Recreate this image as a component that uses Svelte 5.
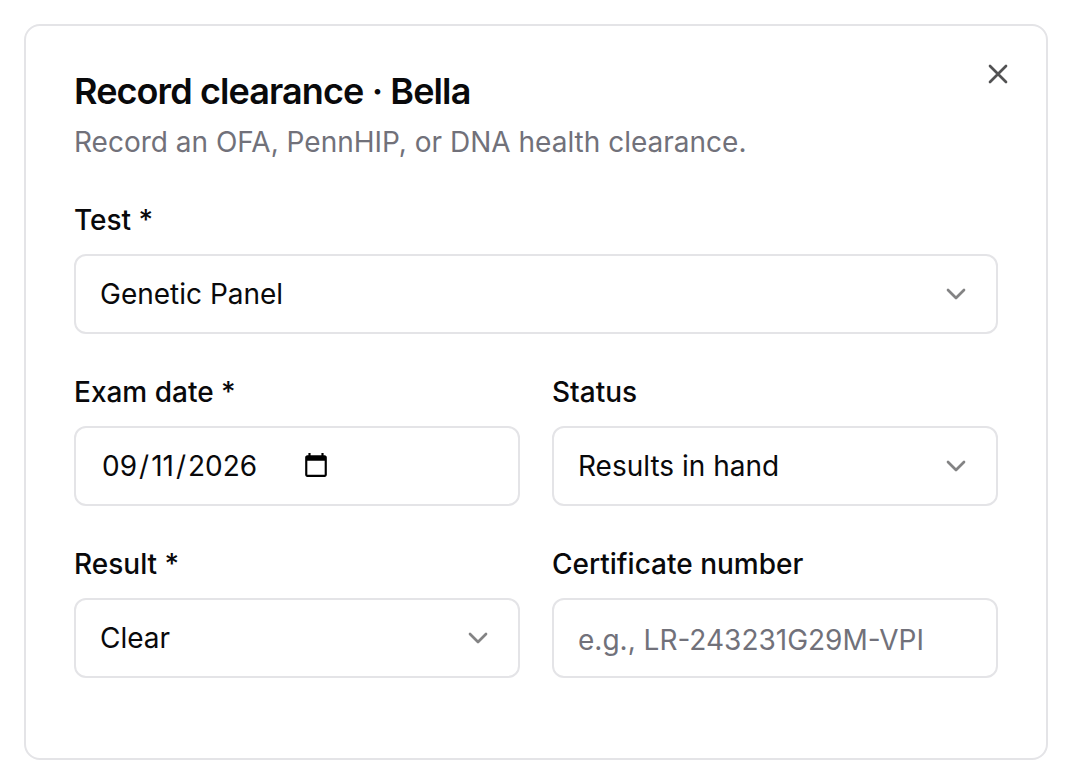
<script>
    const tests = ['Genetic Panel', 'OFA Hips', 'OFA Elbows', 'PennHIP'];
    const statuses = ['Results in hand', 'Scheduled', 'Awaiting results'];
    const results = ['Clear', 'Carrier', 'At risk'];

    let test = $state('Genetic Panel');
    let examDate = $state('2026-09-11');
    let status = $state('Results in hand');
    let result = $state('Clear');
    let certificate = $state('');
    let open = $state(true);
</script>

{#snippet chevron()}
    <svg class="chevron" viewBox="0 0 24 24" aria-hidden="true">
        <path d="m6 9 6 6 6-6" />
    </svg>
{/snippet}

{#if open}
    <main class="dialog">
        <header>
            <div>
                <h1>Record clearance · Bella</h1>
                <p>Record an OFA, PennHIP, or DNA health clearance.</p>
            </div>
            <button type="button" class="close" aria-label="Close" onclick={() => (open = false)}>
                <svg viewBox="0 0 24 24" aria-hidden="true">
                    <path d="M18 6 6 18M6 6l12 12" />
                </svg>
            </button>
        </header>

        <form>
            <div class="field wide">
                <label for="test">Test *</label>
                <div class="select">
                    <select id="test" bind:value={test}>
                        {#each tests as option}
                            <option>{option}</option>
                        {/each}
                    </select>
                    {@render chevron()}
                </div>
            </div>

            <div class="field">
                <label for="exam-date">Exam date *</label>
                <input id="exam-date" type="date" required bind:value={examDate} />
            </div>

            <div class="field">
                <label for="status">Status</label>
                <div class="select">
                    <select id="status" bind:value={status}>
                        {#each statuses as option}
                            <option>{option}</option>
                        {/each}
                    </select>
                    {@render chevron()}
                </div>
            </div>

            <div class="field">
                <label for="result">Result *</label>
                <div class="select">
                    <select id="result" bind:value={result}>
                        {#each results as option}
                            <option>{option}</option>
                        {/each}
                    </select>
                    {@render chevron()}
                </div>
            </div>

            <div class="field">
                <label for="certificate">Certificate number</label>
                <input id="certificate" type="text" placeholder="e.g., LR-243231G29M-VPI" bind:value={certificate} />
            </div>
        </form>
    </main>
{/if}

<style>
    :global(body) {
        background: #fff;
        color: #09090b;
        font-family: Inter, "Liberation Sans", sans-serif;
        font-size: 28px;
    }

    .dialog {
        margin: 24px;
        padding: 48px 48px 80px;
        border: 2px solid #e4e4e7;
        border-radius: 16px;
    }

    header {
        display: flex;
        justify-content: space-between;
        align-items: flex-start;
    }

    h1 {
        margin: 0;
        font-size: 36px;
        line-height: 34px;
        font-weight: 600;
        letter-spacing: -0.025em;
    }

    p {
        margin: 14px 0 0;
        color: #71717a;
        line-height: 40px;
    }

    .close {
        display: flex;
        margin: -16px -16px 0 0;
        padding: 0;
        border: 0;
        background: none;
        color: #09090b;
        opacity: 0.7;
        cursor: pointer;
    }

    svg {
        width: 32px;
        height: 32px;
        fill: none;
        stroke: currentColor;
        stroke-width: 2;
        stroke-linecap: round;
        stroke-linejoin: round;
    }

    form {
        display: grid;
        grid-template-columns: 1fr 1fr;
        gap: 32px;
        margin-top: 32px;
    }

    .field {
        display: flex;
        flex-direction: column;
        gap: 8px;
        min-width: 0;
    }

    .wide {
        grid-column: 1 / -1;
    }

    label {
        font-weight: 500;
        line-height: 52px;
    }

    .select {
        position: relative;
    }

    select,
    input {
        box-sizing: border-box;
        width: 100%;
        height: 80px;
        margin: 0;
        padding: 0 24px;
        border: 2px solid #e4e4e7;
        border-radius: 12px;
        background: #fff;
        color: #09090b;
        font: inherit;
        appearance: none;
    }

    input[type="text"] {
        padding-top: 4px;
    }

    input::placeholder {
        color: #71717a;
        opacity: 1;
    }

    /* keep the calendar button next to the date */
    input::-webkit-datetime-edit {
        flex: none;
    }

    input::-webkit-datetime-edit-month-field,
    input::-webkit-datetime-edit-day-field,
    input::-webkit-datetime-edit-year-field {
        padding: 0 2px;
    }

    /* the edit box reserves room for the empty mm/dd/yyyy text */
    input::-webkit-calendar-picker-indicator {
        margin-left: -10px;
    }

    .chevron {
        position: absolute;
        top: 24px;
        right: 26px;
        color: #09090b;
        opacity: 0.5;
        pointer-events: none;
    }
</style>
